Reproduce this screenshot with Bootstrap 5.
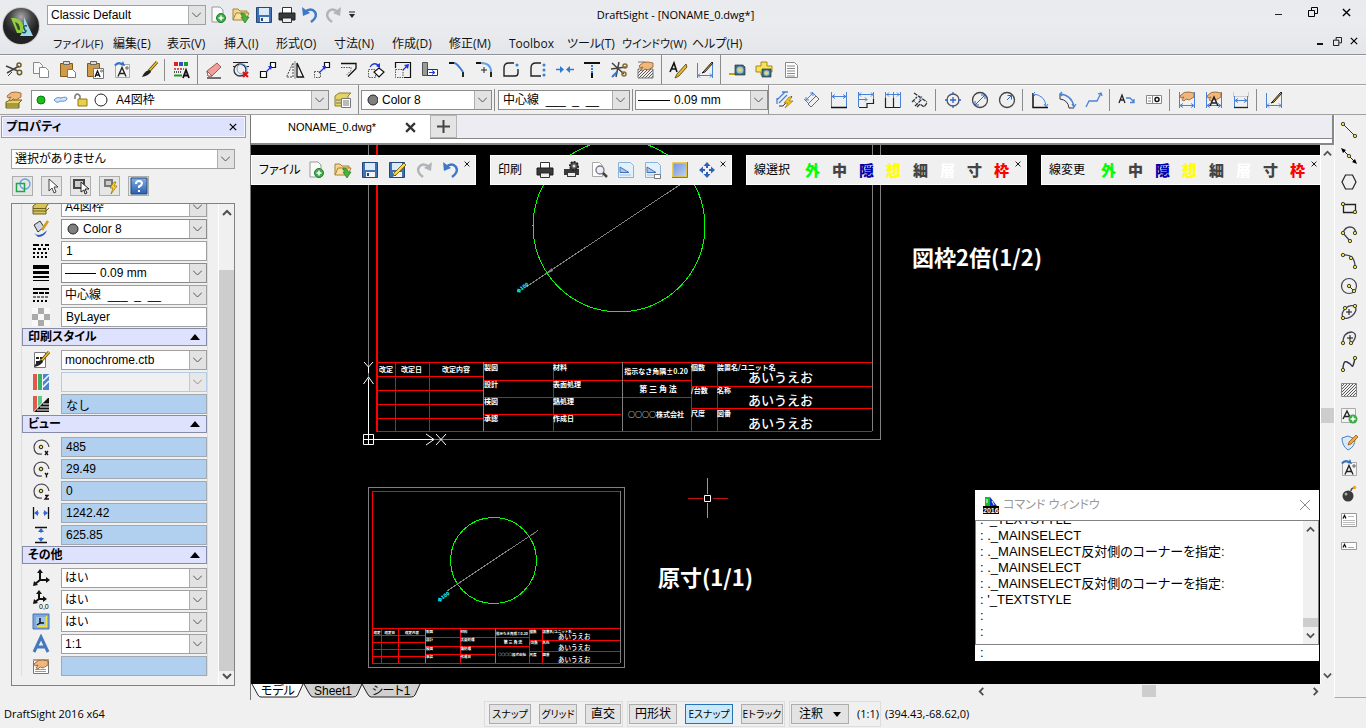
<!DOCTYPE html>
<html lang="ja">
<head>
<meta charset="utf-8">
<meta name="viewport" content="width=device-width, initial-scale=1">
<title>DraftSight - [NONAME_0.dwg*]</title>
<link href="https://cdn.jsdelivr.net/npm/bootstrap@5.3.0/dist/css/bootstrap.min.css" rel="stylesheet">
<script src="https://cdn.jsdelivr.net/npm/bootstrap@5.3.0/dist/js/bootstrap.bundle.min.js" defer></script>
<style>
:root{--ui:"Open Sans","Noto Sans CJK JP",sans-serif;--gothic:"Liberation Sans","Noto Sans CJK JP",sans-serif;--face:#f0f0f0;--line:#a0a0a0}
body{background:var(--face);color:#000;font:11px/16px var(--gothic);font-feature-settings:"palt";overflow:hidden}
button,select,input{font-feature-settings:inherit}
svg{display:block;flex:none}
.ic{width:20px;height:20px}
.ui-face{font-family:var(--ui)}
/* header */
.app-head{background:linear-gradient(#e8eaed,#eaecf0 40%,#e4e6e9);border-bottom:1px solid #8d9199;height:55px}
.title-row{display:grid;grid-template-columns:1fr auto 1fr;height:29px;padding-left:47px;margin-right:7px}
.title-row>.mid{margin-left:-55px}
.win-ctl{height:24px}
.app-logo{left:1px;top:6px;width:40px;height:40px;padding:0;border:0;background:none}
.menus{display:grid;grid-template-columns:60px 54px 57px 52px 58px 58px 57px 60px 58px 55px 70px 60px;padding-left:53px}
.menus a{color:#111;text-decoration:none;white-space:nowrap;font-size:12px;line-height:30px;height:25px}
.menus a:nth-child(1),.menus a:nth-child(11){font-size:11px}
/* controls */
.form-select.pick{font:12px/18px var(--gothic);font-feature-settings:"palt";height:20px;min-height:0;padding:0 20px 0 3px;border:1px solid var(--line);border-radius:0;color:#000;
 background:url("data:image/svg+xml,%3Csvg xmlns='http://www.w3.org/2000/svg' width='9' height='6'%3E%3Cpath d='M0 .5l4.500 4.500L9 .5' fill='none' stroke='%23555'/%3E%3C/svg%3E") right 4px center/9px 6px no-repeat,linear-gradient(#e2e2e2,#e2e2e2) right/16px 100% no-repeat,linear-gradient(#adadad,#adadad) right 16px top/1px 100% no-repeat,#fff}
.form-select.pick:disabled{background-color:var(--face);opacity:.6;border-color:#8fb4dc}
.combo{border:1px solid #8c8c8c;background:#fff;height:20px}
.combo .form-select.pick{border:0;height:18px;padding-left:4px}
.tb{width:27px;height:28px;padding:0;border:0;border-radius:0;display:flex;align-items:center;justify-content:center;flex:none}
.quick .tb{width:23px;height:24px}
.bar{height:30px;border-bottom:1px solid #a0a0a0;box-shadow:inset 0 1px #fafafa}
.bar .sep{width:1px;height:22px;background:#8c8c8c;margin:0 2px;flex:none}
.bar .sep.full{height:29px}
.bar .sep.wide{margin-right:3px}
/* properties */
.side{width:250px;flex:none}
.side-title{border:1px solid #9a9aa8;background:#dfe2fd;box-shadow:inset 0 0 0 1px #f4f5ff;height:22px;margin:1px 4px 0 1px;font-weight:700;font-size:12px}
.side-title button,.x-btn{border:0;background:none;padding:0;line-height:1}
.mini{width:21px;height:20px;border:1px solid #adadad;background:#e6e6e6;padding:0;border-radius:0;display:flex;align-items:center;justify-content:center}
.props{border:1px solid #828282;margin:7px 15px 14px 11px;min-height:0}
.plist{padding:0 10px 0 9px;min-width:0}
.plist>div{border-left:1px solid #ddd;border-right:1px solid #ddd}
.scrolled{margin-top:-7px}
.prow{display:flex;align-items:center;height:20px;margin-bottom:2px}
.prow>svg{margin:0 10px 0 9px}
.prow .form-control{height:20px;min-height:0;padding:0 4px;border:1px solid var(--line);border-radius:0;font:12px/18px var(--gothic);color:#000;min-width:0}
.prow .ro{background:#b1cfee;border-color:#a0a8b0}
.phead{height:18px;margin:-1px 0 4px;border:1px solid #868ba8;background:#dfe2fd;font-weight:700;font-size:12px;line-height:16px;padding:0 6px 0 5px;width:100%;display:flex;justify-content:space-between;align-items:center;text-align:left}
.vbar{width:16px;background:var(--face);flex:none;display:flex;flex-direction:column;align-items:center;border-left:1px solid #fff}
.vbar .thumb{background:#cdcdcd;width:100%}
/* document area */
.work{min-width:0;border-left:1px solid #777}
.tabstrip{height:24px;background:#ececf2;border-bottom:1px solid #888;border-right:2px solid #888}
.doc-tab{width:179px;background:#fff;padding:0 14px 0 37px;height:24px;margin-bottom:-1px}
.add-tab{width:27px;height:23px;background:#e4e4e4;border:1px solid #b5b5b5;padding:0;display:flex;align-items:center;justify-content:center}
.under{height:6px;background:#fff;border-bottom:2px solid #888;border-right:2px solid #888}
.canvas{background:#000;overflow:hidden;min-width:0}
.canvas>svg{position:absolute;width:100%;height:100%;left:0;top:0}
.g{stroke:#808080;fill:none;vector-effect:non-scaling-stroke;shape-rendering:crispEdges}
.r{stroke:#f00;fill:none;vector-effect:non-scaling-stroke;shape-rendering:crispEdges}
.note{font:700 22px "Noto Sans CJK JP",sans-serif;fill:#fff}
.dimtext{font:900 5px "Noto Sans CJK JP",sans-serif;fill:#0ff}
.tt{font:700 7px "Noto Sans CJK JP",sans-serif;fill:#fff}
.tt .big{font-size:13px;font-weight:500}
.tt .mid8{font-size:8px}
.floats{position:absolute;left:0;right:0;top:10px;display:grid;grid-template-columns:225px 242px 281px 282px;column-gap:14px}
.floater{background:var(--face);height:30px;padding-left:8px;box-shadow:inset 0 0 0 1px #fff}
.floater .cap{font-size:12px;flex:1;white-space:nowrap}
.floater .x-btn{width:12px;align-self:flex-start;padding-top:6px}
.kanji{font:900 15px/20px "Noto Sans CJK JP",sans-serif}
.kanji:hover{color:inherit}
.cmd{position:absolute;right:1px;bottom:23px;width:344px;height:171px;background:#fff;box-shadow:2px 3px 8px #0006}
.cmd-title{height:30px;color:#999;font-size:12px;padding:0 8px}
.cmd-log{height:125px;border:1px solid #828282;font-size:13px;line-height:16px}
.cmd-log ol{list-style:none;margin:0;padding:0 0 4px 4px;display:flex;flex-direction:column;justify-content:flex-end;overflow:hidden;white-space:pre}
.cmd-log li{flex:none;height:16px}
.cmd input{border:0;padding:0 5px;height:16px;width:100%;font:13px/16px var(--gothic);display:block}
.sheet-row{height:16px}
.sheet{border:0;background:none;padding:0;height:15px;font-size:12px;line-height:13px;position:relative;margin-right:-2px;white-space:nowrap}
.sheet svg{position:absolute;inset:0;z-index:-1}
.sheets{isolation:isolate}
.rtools{width:32px;flex:none;border-left:1px solid #fff;border-bottom:1px solid #aaa;margin-bottom:2px;padding-top:2px}
.rtools .tb{width:28px;height:26px}
/* status */
.status{height:28px;font-family:var(--ui)}
.sgroup{border:1px solid #ddd;height:26px;padding:0 1px;gap:8px;display:flex;align-items:center}
.sbtn{border:1px solid #adadad;background:#e3e3e3;height:20px;padding:0;font-size:10px;line-height:18px;border-radius:0;white-space:nowrap;display:flex;justify-content:center}
.sbtn.lg{font-size:12px}
.sbtn.on{background:#cce8fb;border-color:#2673b4}
.w35{width:36px}.w38{width:38px}.w42{width:42px}.w48{width:48px}
</style>
</head>
<body class="d-flex flex-column vh-100">
<svg width="0" height="0" class="position-absolute" aria-hidden="true"><defs>
<linearGradient id="blu" x2="0" y2="1"><stop stop-color="#7fb0e8"/><stop offset="1" stop-color="#2b5fae"/></linearGradient>
<linearGradient id="winfill" x2="1" y2="1"><stop stop-color="#6f93dc"/><stop offset="1" stop-color="#c4d4f6"/></linearGradient>
<radialGradient id="orb" cy=".25"><stop stop-color="#aaa"/><stop offset=".6" stop-color="#444"/><stop offset="1" stop-color="#222"/></radialGradient>
<pattern id="hat" width="3" height="3" patternUnits="userSpaceOnUse"><path d="M0 3l3-3" stroke="#333" stroke-width=".8"/></pattern>
<g id="hand"><path d="M3 6q4-5 9-4l5 1v4l-5 3-3-1-2 2-2-1 2-3-3 1z" fill="#f0b77c" stroke="#8b5a2b" stroke-width=".8"/></g>
<g id="brushg"><path d="M18 2l-8 9" stroke="#5b4210" stroke-width="3"/><path d="M18 2l-8 9" stroke="#f0c020" stroke-width="1.500"/><path d="M11 10q-5 0-8 7 6-1 9-5z" fill="#222"/></g>
<symbol id="new" viewBox="0 0 20 20"><path d="M4 2h8l3 3v12H4z" fill="#fafafa" stroke="#999"/><circle cx="13" cy="13" r="4.500" fill="#3fae49" stroke="#1e7f2c"/><path d="M13 10.500v5M10.500 13h5" stroke="#fff" stroke-width="1.500"/></symbol>
<symbol id="open" viewBox="0 0 20 20"><path d="M2 15V4h5l2 2h7v3" fill="#f4d68c" stroke="#a78437"/><path d="M2 15L5 8h13l-3 7z" fill="#f7e0a0" stroke="#a78437"/><path d="M10 8q5 0 5 4h3l-4 6-4-6h2q0-2-2-2z" fill="#45b53c" stroke="#227a1f" stroke-width=".7"/></symbol>
<symbol id="save" viewBox="0 0 20 20"><path d="M2.500 2.500h15v15h-15z" fill="#3f72b5" stroke="#23487c"/><path d="M5 3h10v7H5z" fill="#dbe9f8"/><path d="M6 12h9v5H6z" fill="#f2f2f2"/><path d="M7 13h2v3H7z" fill="#23487c"/></symbol>
<symbol id="saveas" viewBox="0 0 20 20"><use href="#save"/><path d="M17 3L7 13l-1 3 3-1L19 5z" fill="#ffd93b" stroke="#6b5200" stroke-width=".8"/></symbol>
<symbol id="print" viewBox="0 0 20 20"><path d="M5.500 8V2.500h9V8" fill="#fff" stroke="#333"/><path d="M2 8h16v7h-3v-2H5v2H2z" fill="#3a3a3a" stroke="#1c1c1c"/><path d="M5.500 13h9v4.500h-9z" fill="#eee" stroke="#333"/></symbol>
<symbol id="printg" viewBox="0 0 20 20"><path d="M2 9h15v6h-3v2H5v-2H2z" fill="#3a3a3a"/><path d="M6 13h7v3H6z" fill="#eee"/><circle cx="12" cy="6" r="4" fill="#555" stroke="#222" stroke-width="2" stroke-dasharray="2 1"/><circle cx="12" cy="6" r="1.500" fill="#ddd"/></symbol>
<symbol id="undo" viewBox="0 0 20 20"><path d="M5 7q6-5 10 0 3 5-4 10" fill="none" stroke="#3f78c6" stroke-width="2.500"/><path d="M2 2l1 9 7-3z" fill="#3f78c6"/></symbol>
<symbol id="redo" viewBox="0 0 20 20"><path d="M15 7q-6-5-10 0-3 5 4 10" fill="none" stroke="#b0b4b8" stroke-width="2.500"/><path d="M18 2l-1 9-7-3z" fill="#b0b4b8"/></symbol>
<symbol id="cut" viewBox="0 0 20 20"><path d="M2 6l12 5M3 13l12-7" stroke="#444" stroke-width="1.600"/><circle cx="15" cy="5" r="2" fill="none" stroke="#6b5a2c" stroke-width="1.500"/><circle cx="15.500" cy="12.500" r="2.200" fill="none" stroke="#6b5a2c" stroke-width="1.500"/><path d="M4 16l4-4" stroke="#444"/></symbol>
<symbol id="copy" viewBox="0 0 20 20"><path d="M2.500 2.500h6l3 3v8h-9z" fill="#f8f8f8" stroke="#888"/><path d="M8.500 7.500h6l3 3v7h-9z" fill="#fff" stroke="#888"/></symbol>
<symbol id="paste" viewBox="0 0 20 20"><path d="M2.500 3.500h12v13h-12z" fill="#cf9b45" stroke="#7c5a20"/><path d="M5.500 1.500h6v3h-6z" fill="#ddd" stroke="#666"/><path d="M9.500 9.500h5l3 3v5h-8z" fill="#fff" stroke="#777"/></symbol>
<symbol id="pasteA" viewBox="0 0 20 20"><use href="#paste"/><path d="M8.500 8.500h10v10h-10z" fill="#fff" stroke="#777"/><path d="M10 17l2.500-6 2.500 6M11 15h3" fill="none" stroke="#111" stroke-width="1.300"/><circle cx="16.500" cy="11" r="1" fill="none" stroke="#333" stroke-width=".7"/></symbol>
<symbol id="atext" viewBox="0 0 20 20"><path d="M3.500 4.500h14v13h-14z" fill="#f4f4f4" stroke="#aaa"/><path d="M6 16.500l4-9 4 9M7.500 13.500h5" fill="none" stroke="#222" stroke-width="1.400"/><path d="M2 5q4-5 8-2l1-2 2 5-5-1 1-1Q6 3 4 6z" fill="#2b6fca"/><circle cx="15" cy="8" r="1.200" fill="none" stroke="#333" stroke-width=".8"/></symbol>
<symbol id="brush" viewBox="0 0 20 20"><use href="#brushg"/></symbol>
<symbol id="palette" viewBox="0 0 20 20"><path d="M2 2h4v4H2z" fill="#d22"/><path d="M7 2h4v4H7z" fill="#2b50c8"/><path d="M12 2h4v4h-4z" fill="#1a9a2e"/><path d="M2 9h10" stroke="#c22" stroke-width="1.500" stroke-dasharray="2 1"/><path d="M2 12h8" stroke="#222" stroke-width="1.500" stroke-dasharray="1 1"/><path d="M2 15.500h8" stroke="#1a9a2e" stroke-width="2"/><path d="M11 18l3-8 3 8M12 15.500h4" fill="none" stroke="#111" stroke-width="1.800"/></symbol>
<symbol id="eraser" viewBox="0 0 20 20"><path d="M3 18h14" stroke="#444" stroke-width="1.500"/><path d="M3 11L13 3l4 4-9 9H4z" fill="#eda19b" stroke="#a35a54"/><path d="M3 11l5 5H4z" fill="#fff" stroke="#a35a54"/></symbol>
<symbol id="circx" viewBox="0 0 20 20"><path d="M2 2.500h15M2 6.500h2M15 6.500h3" stroke="#222"/><circle cx="9" cy="10" r="6" fill="none" stroke="#333" stroke-width="1.300"/><circle cx="11" cy="9" r="5" fill="none" stroke="#6aa0e0"/><path d="M12 12l5 5m0-5l-5 5" stroke="#e01010" stroke-width="2"/></symbol>
<symbol id="move" viewBox="0 0 20 20"><path d="M2.500 11.500h6v6h-6zM12.500 2.500h5v5h-5z" fill="#fff" stroke="#111" stroke-width="1.200"/><path d="M8 12l5-5" stroke="#2036d8" stroke-width="1.300"/><path d="M14 6h-4l3 4z" fill="#2036d8"/></symbol>
<symbol id="mirror" viewBox="0 0 20 20"><path d="M8 3v14H1.500z" fill="none" stroke="#444" stroke-dasharray="2 1"/><path d="M12 3v14h6.500z" fill="none" stroke="#111" stroke-width="1.300"/><path d="M10 1v18" stroke="#888"/></symbol>
<symbol id="copyent" viewBox="0 0 20 20"><path d="M2.500 11.500h6v6h-6z" fill="none" stroke="#555" stroke-dasharray="1.500 1"/><path d="M12.500 2.500h5v5h-5z" fill="#fff" stroke="#111" stroke-width="1.200"/><path d="M7 13l6-6" stroke="#2036d8" stroke-width="1.300"/><path d="M14 6h-4l3 4z" fill="#2036d8"/></symbol>
<symbol id="offset" viewBox="0 0 20 20"><path d="M2 3.500h15v5l-8 8" fill="none" stroke="#111" stroke-width="1.300"/><path d="M2 7.500h10v3l-5 5" fill="none" stroke="#555" stroke-dasharray="1.500 1"/></symbol>
<symbol id="rotate" viewBox="0 0 20 20"><path d="M2.500 9.500h7v8h-7z" fill="none" stroke="#555" stroke-dasharray="1.500 1"/><path d="M13 8l5 4-5 5-5-5z" fill="#fff" stroke="#111" stroke-width="1.200"/><path d="M4 7q4-6 9-1" fill="none" stroke="#2036d8" stroke-width="1.300"/><path d="M14 8V3l-4 3z" fill="#2036d8"/></symbol>
<symbol id="scale" viewBox="0 0 20 20"><path d="M2.500 8V2.500h15v15H11" fill="none" stroke="#111" stroke-width="1.200"/><path d="M2.500 9.500h7.500v8H2.500z" fill="none" stroke="#555" stroke-dasharray="1.500 1"/><path d="M10 10l5-5" stroke="#2036d8" stroke-width="1.300"/><path d="M16 4l-5 1 4 4z" fill="#2036d8"/></symbol>
<symbol id="stretch" viewBox="0 0 20 20"><path d="M2.500 2.500h5v13h-5z" fill="#999" stroke="#555"/><path d="M7.500 9.500h10v6h-10z" fill="#fff" stroke="#333"/><path d="M9 12.500h5m-2-2l3 2-3 2" fill="none" stroke="#2036d8"/></symbol>
<symbol id="fillet" viewBox="0 0 20 20"><path d="M2 3h5M16 12v5" stroke="#111" stroke-width="1.800"/><path d="M7 3q3 0 9 9" fill="none" stroke="#3b7fd0" stroke-width="2"/></symbol>
<symbol id="chamfer" viewBox="0 0 20 20"><path d="M2 3h5M17 12v5" stroke="#111" stroke-width="1.800"/><path d="M7 3q10 0 10 9" fill="none" stroke="#62a0e8" stroke-width="2"/><path d="M7 10h6M10 7v6" stroke="#222"/></symbol>
<symbol id="cor1" viewBox="0 0 20 20"><path d="M13 3H8Q3 3 3 8v8h11q3 0 3-3V9" fill="none" stroke="#222" stroke-width="1.400"/><circle cx="16" cy="5" r="1.500" fill="#3b7fd0"/></symbol>
<symbol id="cor2" viewBox="0 0 20 20"><path d="M13 3H8Q3 3 3 8v8h10" fill="none" stroke="#222" stroke-width="1.400"/><circle cx="16" cy="5" r="1.500" fill="#3b7fd0"/><circle cx="16" cy="10" r="1.500" fill="#3b7fd0"/><circle cx="16" cy="15" r="1.500" fill="#3b7fd0"/></symbol>
<symbol id="join" viewBox="0 0 20 20"><path d="M1 9.500h5M14 9.500h5" stroke="#2e7ad1" stroke-width="1.500"/><path d="M5 6l4 3.500L5 13zM15 6l-4 3.500 4 3.500z" fill="#2e7ad1"/></symbol>
<symbol id="trim" viewBox="0 0 20 20"><path d="M2 3h16" stroke="#111" stroke-width="2"/><path d="M10 5v8" stroke="#3b7fd0" stroke-width="2" stroke-dasharray="2 1"/><path d="M10 13v5" stroke="#111" stroke-width="2"/></symbol>
<symbol id="split" viewBox="0 0 20 20"><path d="M3 3l12 11M10 2L7 17M2 9l15-2" stroke="#444" stroke-width="1.500"/><circle cx="16" cy="6" r="2" fill="none" stroke="#8a6a30" stroke-width="1.500"/><circle cx="15" cy="14" r="2" fill="none" stroke="#8a6a30" stroke-width="1.500"/><path d="M3 17l5-5" stroke="#2e7ad1" stroke-width="2"/></symbol>
<symbol id="hatchhand" viewBox="0 0 20 20"><path d="M2 9h15v9H2z" fill="url(#hat)" stroke="#777"/><path d="M2 2h7" stroke="#777"/><use href="#hand"/></symbol>
<symbol id="apen" viewBox="0 0 20 20"><path d="M2 12L6 3l3 9M3 9h5" fill="none" stroke="#111" stroke-width="1.600"/><path d="M18 4l-9 10-2 4 4-2 8-9z" fill="#e5b92e" stroke="#4c3a0a" stroke-width=".8"/></symbol>
<symbol id="dimpen" viewBox="0 0 20 20"><path d="M2.500 3v15M17.500 3v15M3 15.500h14M5 13.500l-2 2 2 2M15 13.500l2 2-2 2" fill="none" stroke="#4a82d8"/><path d="M17 2l-8 9-2 2 3-1 8-9z" fill="#d8a928" stroke="#222"/></symbol>
<symbol id="tape" viewBox="0 0 20 20"><path d="M2 14h8" stroke="#c8a400" stroke-width="2"/><path d="M8 5h8l2 2v8H8z" fill="#3e6f86" stroke="#234" stroke-width=".7"/><circle cx="13" cy="10" r="3.500" fill="#9cc4d4"/><circle cx="13" cy="10" r="1.800" fill="#f5d94a"/></symbol>
<symbol id="tape2" viewBox="0 0 20 20"><path d="M7 2h6v4h5v6h-5v3H7v-3H2V6h5z" fill="#f7e25a" stroke="#a58b10"/><path d="M8 9h9v8H8z" fill="#3e6f86" stroke="#234" stroke-width=".7"/><circle cx="12.500" cy="13" r="2.800" fill="#9cc4d4"/><circle cx="12.500" cy="13" r="1.500" fill="#f5d94a"/></symbol>
<symbol id="page" viewBox="0 0 20 20"><path d="M4.500 2.500h9l3 3v12h-12z" fill="#fff" stroke="#888"/><path d="M6 6h8M6 8.500h8M6 11h8M6 13.500h8M6 16h8" stroke="#888"/></symbol>
<symbol id="laymgr" viewBox="0 0 20 20"><path d="M2 12l4-2h12l-3 3v5H2z" fill="#e4d265" stroke="#6d611a"/><path d="M2 14h13M2 16h13" stroke="#6d611a"/><use href="#hand"/></symbol>
<symbol id="layers" viewBox="0 0 20 20"><path d="M2 9l4-3h12l-3 4v7H2z" fill="#d8c45c" stroke="#6d611a"/><path d="M2 11.500h13M2 14h13l3-3" stroke="#6d611a" fill="none"/></symbol>
<symbol id="layst" viewBox="0 0 20 20"><path d="M2 6l4-3h12l-3 3v10H2z" fill="#e4d265" stroke="#8d812a"/><path d="M8.500 8.500h9v9h-9z" fill="#fff" stroke="#777"/><path d="M3 10h5M3 13h5M10 11h6M10 13h6M10 15h6" stroke="#777"/></symbol>
<symbol id="d1" viewBox="0 0 20 20"><path d="M2 10l8-8M4 13l8-8M2 8v6M7 2h6" fill="none" stroke="#4a82d8" stroke-width="1.300"/><path d="M4 16h4L17 6" fill="none" stroke="#333"/><path d="M14 7l-5 6h4l-3 5 8-7h-4l3-4z" fill="#ffc61a" stroke="#94700a" stroke-width=".7"/></symbol>
<symbol id="d2" viewBox="0 0 20 20"><path d="M2 9l4 4M10 2l4 4M4 10l7-7M4 10V7M4 10h3M11 3v3M11 3H8" stroke="#4a82d8" fill="none"/><path d="M6 14l8-8 3 3-8 8z" fill="none" stroke="#667" stroke-width="1"/></symbol>
<symbol id="d3" viewBox="0 0 20 20"><path d="M2.500 2v16M17.500 2v16M3 6.500h14M6 4.500l-3 2 3 2M14 4.500l3 2-3 2" stroke="#4a82d8" fill="none"/><path d="M2 17.500h16" stroke="#111" stroke-width="1.500"/></symbol>
<symbol id="d4" viewBox="0 0 20 20"><path d="M2.500 2v15M17.500 2v8M3 4.500h14M3 9.500h8M5 2.500l-2 2 2 2M15 2.500l2 2-2 2M9 7.500l2 2-2 2" stroke="#4a82d8" fill="none"/><path d="M3 17.500h8v-4h6.500V9" stroke="#222" fill="none" stroke-width="1.200"/></symbol>
<symbol id="d5" viewBox="0 0 20 20"><path d="M2.500 2v10M10.500 2v15M17.500 2v15M3 4.500h15M6 2.500l-2 2 2 2M14 2.500l2 2-2 2" stroke="#4a82d8" fill="none"/><path d="M2.500 8v9.500h8V8M10 17.500h7.500" stroke="#222" fill="none" stroke-width="1.200"/></symbol>
<symbol id="d6" viewBox="0 0 20 20"><path d="M4 3l13 9M2 12l5-5M5 16l7-7M7 17l3-3 4 3 3-4" stroke="#333" fill="none" stroke-width="1.300" stroke-dasharray="4 1"/><path d="M4 11l4 4M12 6l-3 4" stroke="#4a82d8"/></symbol>
<symbol id="d7" viewBox="0 0 20 20"><circle cx="10" cy="10" r="6" fill="none" stroke="#555" stroke-width="1.300"/><path d="M10 7v6M7 10h6M10 2v3M10 15v3M2 10h3M15 10h3" stroke="#2b62d0" stroke-width="1.300"/></symbol>
<symbol id="d8" viewBox="0 0 20 20"><circle cx="10" cy="10" r="7.500" fill="none" stroke="#444" stroke-width="1.300"/><path d="M5 15L15 5M5 15v-4M5 15h4M15 5v4M15 5h-4" stroke="#2b62d0" fill="none"/></symbol>
<symbol id="d9" viewBox="0 0 20 20"><circle cx="10" cy="10" r="7.500" fill="none" stroke="#444" stroke-width="1.300"/><path d="M10 10l4.500-4.500M14.500 5.500v4M14.500 5.500h-4" stroke="#2b62d0" fill="none"/></symbol>
<symbol id="d10" viewBox="0 0 20 20"><path d="M3 3v14.500h15" stroke="#111" fill="none" stroke-width="1.500"/><path d="M3 4q12 1 13 12M5 2l-2 2 2 2M14 14l2 3 2-3" stroke="#4a82d8" fill="none"/></symbol>
<symbol id="d11" viewBox="0 0 20 20"><path d="M3 9q8 1 9 9M3 4v5M12 18h5" stroke="#333" fill="none"/><path d="M3 4q12 1 14 13M5 2l-2 2 2 2M15 14l2 3 2-3" stroke="#4a82d8" fill="none" stroke-width="1.300"/></symbol>
<symbol id="d12" viewBox="0 0 20 20"><path d="M2 17l3-6h8l4-8M14 4l3-1 1 3" stroke="#4a82d8" fill="none" stroke-width="1.300"/></symbol>
<symbol id="d13" viewBox="0 0 20 20"><path d="M2 13l3-8 3 8M3 10h4" stroke="#222" fill="none" stroke-width="1.300"/><path d="M9 8h4l4 4M17 9v3.500h-4" stroke="#4a82d8" fill="none" stroke-width="1.300"/></symbol>
<symbol id="d14" viewBox="0 0 20 20"><path d="M2.500 5.500h15v8h-15zM8.500 5v9" fill="#fff" stroke="#888"/><path d="M4 8h3M4 11h3" stroke="#888"/><circle cx="13" cy="9.500" r="2" fill="none" stroke="#111" stroke-width="1.500"/></symbol>
<symbol id="d15" viewBox="0 0 20 20"><path d="M2.500 2v16M17.500 2v16M3 15.500h14M6 13.500l-3 2 3 2M14 13.500l3 2-3 2" stroke="#4a82d8" fill="none"/><use href="#hand"/></symbol>
<symbol id="d16" viewBox="0 0 20 20"><use href="#d15"/><path d="M6 16l4-9 4 9M8 13h5" stroke="#222" fill="none" stroke-width="1.500"/></symbol>
<symbol id="d17" viewBox="0 0 20 20"><path d="M2.500 2v5M17.500 2v5M2 6.500h16" stroke="#ccc"/><path d="M3.500 6v12M16.500 6v12M4 10.500h12M7 8.500l-3 2 3 2M13 8.500l3 2-3 2" stroke="#4a82d8" fill="none"/><path d="M3 17.500h14" stroke="#222" stroke-width="1.300"/></symbol>
<symbol id="paint" viewBox="0 0 20 20"><path d="M3 6l6-4 4 6-6 5z" fill="#cfd6df" stroke="#333"/><path d="M3 14q6 5 13-3-2 7-9 7z" fill="#2a55c4"/><path d="M17 2l-6 9" stroke="#d89b18" stroke-width="2.500"/></symbol>
<symbol id="lt" viewBox="0 0 20 20"><path d="M2 4h16" stroke="#000" stroke-width="2" stroke-dasharray="6 2 2 2"/><path d="M2 8h16" stroke="#000" stroke-width="2" stroke-dasharray="3 2"/><path d="M2 12h16M2 16h16" stroke="#000" stroke-width="2" stroke-dasharray="2 2"/></symbol>
<symbol id="lw" viewBox="0 0 20 20"><path d="M2 2h16v4H2zM2 8h16v3H2zM2 13h16v2H2zM2 17h16v1H2z"/></symbol>
<symbol id="lts" viewBox="0 0 20 20"><path d="M2 4h16" stroke="#000" stroke-width="2"/><path d="M2 8h16" stroke="#000" stroke-dasharray="5 1" stroke-width="2"/><path d="M2 12h16" stroke="#000" stroke-dasharray="3 1" stroke-width="1"/><path d="M2 16h16" stroke="#000" stroke-dasharray="2 2" stroke-width="2"/></symbol>
<symbol id="tran" viewBox="0 0 20 20"><path d="M1 1h18v18H1z" fill="#f8f8f8"/><path d="M7 1h6v6H7zM1 7h6v6H1zM13 7h6v6h-6zM7 13h6v6H7z" fill="#aaa"/></symbol>
<symbol id="pstyle" viewBox="0 0 20 20"><path d="M3.500 2.500h11v15h-11z" fill="#fff" stroke="#777"/><path d="M5 8h7M5 12h5" stroke="#222" stroke-width="2" stroke-dasharray="3 1"/><use href="#brushg"/></symbol>
<symbol id="bars" viewBox="0 0 20 20"><path d="M2 2h4v16H2z" fill="#e2584e"/><path d="M7 2h4v16H7z" fill="#35b36a"/><path d="M12 2h6v16h-6z" fill="#4d82cc"/><path d="M12 9l6-6M12 15l6-6" stroke="#fff" stroke-width="1.500"/></symbol>
<symbol id="bars2" viewBox="0 0 20 20"><path d="M2 2h4v12l-4 4z" fill="#e2584e"/><path d="M7 2h4v7l-4 4z" fill="#5cc988"/><path d="M17 4L3 18h15V4z" fill="#111"/><path d="M9 13h9M6 16h12M12 10h6" stroke="#fff"/></symbol>
<symbol id="cen" viewBox="0 0 20 20"><path d="M11 17q-8 1-8-7 1-7 8-7 6 1 7 7" fill="none" stroke="#444" stroke-width="1.200"/><circle cx="10" cy="10" r="1.800" fill="#f5e03a" stroke="#222"/></symbol>
<symbol id="cx" viewBox="0 0 20 20"><use href="#cen"/><path d="M14 14l3 4m0-4l-3 4" stroke="#111" stroke-width="1.300"/></symbol>
<symbol id="cy" viewBox="0 0 20 20"><use href="#cen"/><path d="M14 14l1.500 2 1.500-2M15.500 16v2.500" fill="none" stroke="#111" stroke-width="1.300"/></symbol>
<symbol id="cz" viewBox="0 0 20 20"><use href="#cen"/><path d="M14 14.500h3l-3 3.500h4" fill="none" stroke="#111" stroke-width="1.300"/></symbol>
<symbol id="wid" viewBox="0 0 20 20"><path d="M2.500 4v12M17.500 4v12" stroke="#111" stroke-width="1.300"/><path d="M4 10h4M12 10h4" stroke="#3568d8"/><path d="M3 10l4-3v6zM17 10l-4-3v6z" fill="#3568d8"/></symbol>
<symbol id="hei" viewBox="0 0 20 20"><path d="M4 2.500h12M4 17.500h12" stroke="#111" stroke-width="1.300"/><path d="M10 5v3M10 12v4" stroke="#3568d8"/><path d="M10 3L7 7h6zM10 17l-3-4h6z" fill="#3568d8"/></symbol>
<symbol id="ucs" viewBox="0 0 20 20"><path d="M9 4v8h8M9 12l-5 4" fill="none" stroke="#111" stroke-width="2"/><path d="M9 1L6 5h6zM19 12l-4-3v6zM2 18l1-5 4 4z" fill="#111"/></symbol>
<symbol id="ucs0" viewBox="0 0 20 20"><path d="M8 3v6h6M8 9l-4 3" fill="none" stroke="#111" stroke-width="2"/><path d="M8 0L5 4h6zM16 9l-4-3v6zM2 14l1-5 4 4z" fill="#111"/><text x="8" y="19" font-size="7" font-family="Liberation Sans">0,0</text></symbol>
<symbol id="vp" viewBox="0 0 20 20"><path d="M2 2h16v15H2z" fill="#7fa7dd" stroke="#4974b4"/><path d="M5 5h10v9H5z" fill="#9cc4e8"/><path d="M15.500 4v10.500H6" fill="none" stroke="#f6e23b" stroke-width="1.500"/><path d="M9 6v5h4M9 11l-3 2" fill="none" stroke="#111" stroke-width="1.500"/></symbol>
<symbol id="bigA" viewBox="0 0 20 20"><path d="M3 18L10 3l7 15M6 13h8" fill="none" stroke="#4678bd" stroke-width="3"/></symbol>
<symbol id="handdoc" viewBox="0 0 20 20"><path d="M2.500 4.500h15v13h-15z" fill="#fff" stroke="#777"/><path d="M4 13.500h11M4 15.500h11" stroke="#999"/><path d="M2 3h16v2H2z" fill="#b98"/><g transform="translate(0 2)"><use href="#hand"/></g></symbol>
<symbol id="shapes" viewBox="0 0 20 20"><circle cx="12" cy="8" r="5" fill="none" stroke="#5ba2dd" stroke-width="1.300"/><path d="M3.500 7.500h8v8h-8z" fill="none" stroke="#1fa64a" stroke-width="1.500"/></symbol>
<symbol id="arrow" viewBox="0 0 20 20"><path d="M7 3v12l3-3 2 5 2-1-2-5h4z" fill="#fff" stroke="#444"/></symbol>
<symbol id="selwin" viewBox="0 0 20 20"><path d="M3 4h10v8H3z" fill="#ccc" stroke="#444" stroke-width="2"/><path d="M10 6v10l3-2 1 4 2-1-2-4h4z" fill="#fff" stroke="#222"/></symbol>
<symbol id="quick" viewBox="0 0 20 20"><path d="M5 4h7v6H5z" fill="#ccc" stroke="#777" stroke-width="2"/><path d="M14 6l-4 6h3l-2 6 6-8h-3l2-4z" fill="#ffd22e" stroke="#94700a" stroke-width=".7"/></symbol>
<symbol id="help" viewBox="0 0 20 20"><path d="M2 2h16v16H2z" fill="url(#blu)" stroke="#23487c"/><path d="M7 8q0-3 3-3t3 2.500q0 1.500-3 3V12M10 14v2" fill="none" stroke="#fff" stroke-width="2"/></symbol>
<symbol id="prev" viewBox="0 0 20 20"><path d="M3.500 2.500h7l3 3v11h-10z" fill="#fff" stroke="#aaa"/><circle cx="11" cy="10" r="4" fill="#eef" stroke="#777" stroke-width="1.300"/><path d="M14 13l4 4" stroke="#444" stroke-width="2.500"/></symbol>
<symbol id="lay1" viewBox="0 0 20 20"><path d="M2.500 2.500h12l3 3v12h-15z" fill="#e2f1fc" stroke="#86b4da"/><path d="M4 12.500V7l9 5.500z" fill="#a9c6ec" stroke="#4a72b0"/><path d="M4 15h11" stroke="#9cc3ea"/></symbol>
<symbol id="lay2" viewBox="0 0 20 20"><use href="#lay1"/><path d="M11.500 14.500h6v4h-6z" fill="#fff" stroke="#777"/></symbol>
<symbol id="win" viewBox="0 0 20 20"><path d="M3 3h14v14H3z" fill="url(#winfill)" stroke="#e4c02a" stroke-width="1.500"/><path d="M2 17.500h15.500V2" fill="none" stroke="#777"/></symbol>
<symbol id="pan" viewBox="0 0 20 20"><path d="M10 2L6.500 6h7zM10 18l-3.500-4h7zM2 10l4-3.500v7zM18 10l-4-3.500v7z" fill="#2e62b8"/><path d="M10 5v3M10 12v3M5 10h3M12 10h3" stroke="#2e62b8" stroke-width="2"/></symbol>
<g id="pt"><circle r="1.700" fill="#f2e13c" stroke="#333" stroke-width=".9"/></g>
<symbol id="t1" viewBox="0 0 20 20"><path d="M4 4l12 12" stroke="#333"/><use href="#pt" x="4" y="4"/><use href="#pt" x="16" y="16"/></symbol>
<symbol id="t2" viewBox="0 0 20 20"><path d="M3 3l14 14" stroke="#222"/><path d="M2 2l5 2-3 3zM18 18l-5-2 3-3z"/><use href="#pt" x="10" y="10"/></symbol>
<symbol id="t3" viewBox="0 0 20 20"><path d="M6.500 3h7L17 10l-3.500 7h-7L3 10z" fill="none" stroke="#222" stroke-width="1.200"/></symbol>
<symbol id="t4" viewBox="0 0 20 20"><path d="M4.500 6.500h12v8h-12z" fill="none" stroke="#222" stroke-width="1.300"/><use href="#pt" x="4" y="6"/><use href="#pt" x="16" y="14"/></symbol>
<symbol id="t5" viewBox="0 0 20 20"><path d="M11 17l-7-8q2-6 7-6t6 6" fill="none" stroke="#445" stroke-width="1.300"/><use href="#pt" x="4" y="9"/><use href="#pt" x="16" y="9"/><use href="#pt" x="11" y="17"/></symbol>
<symbol id="t6" viewBox="0 0 20 20"><path d="M4 5q12-1 12 12" fill="none" stroke="#445" stroke-width="1.300"/><use href="#pt" x="4" y="5"/><use href="#pt" x="12" y="8"/><use href="#pt" x="16" y="17"/></symbol>
<symbol id="t7" viewBox="0 0 20 20"><circle cx="10" cy="10" r="7.500" fill="none" stroke="#445" stroke-width="1.200"/><path d="M10 10l5 5" stroke="#222"/><use href="#pt" x="10" y="10"/><use href="#pt" x="15" y="15"/></symbol>
<symbol id="t8" viewBox="0 0 20 20"><ellipse cx="10" cy="10" rx="8" ry="5" transform="rotate(-40 10 10)" fill="none" stroke="#445" stroke-width="1.300"/><path d="M7 10h6M10 7v6" stroke="#111"/><use href="#pt" x="16" y="4"/><use href="#pt" x="4" y="16"/><use href="#pt" x="6" y="6"/></symbol>
<symbol id="t9" viewBox="0 0 20 20"><path d="M4 15q0-11 9-11 7 2 0 11" fill="none" stroke="#445" stroke-width="1.300"/><path d="M8 10h6M11 7v6" stroke="#111"/><use href="#pt" x="4" y="15"/><use href="#pt" x="12" y="15"/></symbol>
<symbol id="t10" viewBox="0 0 20 20"><path d="M4 16q0-10 4-8t5 4 3-8" fill="none" stroke="#334" stroke-width="1.400"/><use href="#pt" x="4" y="16"/><use href="#pt" x="16" y="4"/></symbol>
<symbol id="t11" viewBox="0 0 20 20"><path d="M2.500 3.500h15v13h-15z" fill="url(#hat)" stroke="#888"/></symbol>
<symbol id="t12" viewBox="0 0 20 20"><path d="M2.500 2.500h14v14h-14z" fill="#f4f4f4" stroke="#aaa"/><path d="M4 13l4-8 4 8M5.500 10.500h5" fill="none" stroke="#222" stroke-width="1.400"/><circle cx="14" cy="13" r="4.500" fill="#3fae49"/><path d="M14 10.500v5M11.500 13h5" stroke="#fff" stroke-width="1.500"/></symbol>
<symbol id="t13" viewBox="0 0 20 20"><path d="M3 6l6-2 7 3q0 8-7 11-6-4-6-12z" fill="#dbe8f6" stroke="#4d82c4"/><path d="M17 3l-7 7-1 3 3-1 7-7z" fill="#f4a93a" stroke="#8b5a10" stroke-width=".8"/></symbol>
<symbol id="bomb" viewBox="0 0 20 20"><circle cx="9" cy="12" r="5.500" fill="#3a3a3a"/><circle cx="7" cy="10" r="1.500" fill="#aaa"/><path d="M12 7q0-3 3-3" fill="none" stroke="#555" stroke-width="1.500"/><circle cx="15.500" cy="3.500" r="1.800" fill="#f5a21a"/></symbol>
<symbol id="note1" viewBox="0 0 20 20"><path d="M2.500 3.500h15v13h-15z" fill="#fff" stroke="#999"/><path d="M4 8.500l1.500-3 1.500 3" fill="none" stroke="#111" stroke-width="1.300"/><path d="M9 6.500h6M4 10.500h12M4 12.500h12M4 14.500h12" stroke="#bbb"/></symbol>
<symbol id="note2" viewBox="0 0 20 20"><path d="M2.500 6.500h15v7h-15z" fill="#fff" stroke="#999"/><path d="M4 11.500l1.500-3 1.500 3" fill="none" stroke="#111" stroke-width="1.300"/><path d="M9 11.500h6" stroke="#aaa"/></symbol>
<symbol id="up" viewBox="0 0 10 10"><path d="M1 7l4-4 4 4" fill="none" stroke="#505050" stroke-width="2"/></symbol>
<symbol id="dn" viewBox="0 0 10 10"><path d="M1 3l4 4 4-4" fill="none" stroke="#505050" stroke-width="2"/></symbol>
<symbol id="xx" viewBox="0 0 10 10"><path d="M1 1l8 8M9 1L1 9" stroke="currentColor" stroke-width="1.500"/></symbol>
<symbol id="rest" viewBox="0 0 10 10"><path d="M3.500 3V.5h6v6H7M.5 3.500h6v6h-6z" fill="none" stroke="currentColor"/></symbol>

<g id="frame">
 <path class="g" d="M0 0h512v360H0zM504 8v344"/>
 <path class="r" d="M504 8H8v344h496M9 8v344M8 283h496M8 297h107M8 311h107M8 325h107M8 339h107M27 283v69M61 283v69M185 283v69M323 283v69M349 283v69M115 301h208M115 318h208M115 335h138M323 307h181M323 329h181"/>
 <path class="g" d="M115 283v69M254 283v69"/>
 <circle class="r" cx="251" cy="147" r="86" style="stroke:#0f0"/>
 <path class="g" d="M158 208L340 87" stroke="#999"/><path d="M176 196l8-7 1 3zM324 98l8-7 1 3z" fill="#888"/>
 <g class="tt">
  <text x="11" y="293">改定</text><text x="33" y="293">改定日</text><text x="74" y="293">改定内容</text>
  <text x="116" y="291">製図</text><text x="116" y="308">設計</text><text x="116" y="325">検図</text><text x="116" y="342">承認</text>
  <text x="185" y="291">材料</text><text x="185" y="308">表面処理</text><text x="185" y="325">熱処理</text><text x="185" y="342">作成日</text>
  <text x="288" y="295" text-anchor="middle">指示なき角隅±0.20</text><text x="290" y="313" text-anchor="middle" class="mid8">第 三 角 法</text><text x="288" y="338" text-anchor="middle">○○○○株式会社</text>
  <text x="323" y="291">個数</text><text x="323" y="314">/台数</text><text x="323" y="337">尺度</text>
  <text x="349" y="291">装置名/ユニット名</text><text x="349" y="314">名称</text><text x="349" y="337">図番</text>
  <text class="big" x="380" y="303">あいうえお</text><text class="big" x="380" y="326">あいうえお</text><text class="big" x="380" y="349">あいうえお</text>
 </g>
</g>
</defs></svg>

<header class="app-head position-relative ui-face">
 <button class="app-logo position-absolute" aria-label="DraftSight"><svg width="40" height="40" viewBox="0 0 40 40"><circle cx="20" cy="20" r="19" fill="#ccc"/><circle cx="20" cy="20" r="18" fill="url(#orb)"/><path d="M10 12h4q9 2 9 12l-1 3h-6z" fill="#8fd03c"/><path d="M14 16q5 1 5 8h-2z" fill="#3b4a2a"/><path d="M23 11l9 19H19l4-7z" fill="#9fd8e8"/><path d="M26 20q-4-1-3 2t2 3q-1 3-4 1" fill="none" stroke="#1c5066" stroke-width="1.500"/></svg></button>
 <div class="title-row">
  <div class="d-flex align-items-center quick">
   <select class="form-select pick ui-face" style="width:159px" aria-label="Workspace"><option>Classic Default</option></select>
   <button class="btn tb ms-0" aria-label="New"><svg class="ic"><use href="#new"/></svg></button><button class="btn tb" aria-label="Open"><svg class="ic"><use href="#open"/></svg></button><button class="btn tb" aria-label="Save"><svg class="ic"><use href="#save"/></svg></button><button class="btn tb" aria-label="Print"><svg class="ic"><use href="#print"/></svg></button><button class="btn tb" aria-label="Undo"><svg class="ic"><use href="#undo"/></svg></button><button class="btn tb" aria-label="Redo"><svg class="ic"><use href="#redo"/></svg></button>
   <button class="x-btn ps-1" aria-label="Customize"><svg width="8" height="8"><path d="M1 1h6" stroke="#223"/><path d="M1 3h6l-3 4z" fill="#223"/></svg></button>
  </div>
  <div class="mid align-self-center">DraftSight - [NONAME_0.dwg*]</div>
  <div class="win-ctl d-flex justify-content-end align-items-center gap-4 pe-1">
   <button class="x-btn" aria-label="Minimize"><svg width="9" height="9"><path d="M0 6.500h7" stroke="#222"/></svg></button>
   <button class="x-btn" aria-label="Restore"><svg width="10" height="10"><use href="#rest"/></svg></button>
   <button class="x-btn pe-1" aria-label="Close"><svg width="9" height="9"><use href="#xx"/></svg></button>
  </div>
 </div>
 <div class="d-flex justify-content-between">
 <nav class="menus"><a href="#">ファイル(F)</a><a href="#">編集(E)</a><a href="#">表示(V)</a><a href="#">挿入(I)</a><a href="#">形式(O)</a><a href="#">寸法(N)</a><a href="#">作成(D)</a><a href="#">修正(M)</a><a href="#">Toolbox</a><a href="#">ツール(T)</a><a href="#">ウインドウ(W)</a><a href="#">ヘルプ(H)</a></nav>
 <div class="win-ctl d-flex align-items-center gap-2 pe-2">
  <button class="x-btn" aria-label="Minimize document"><svg width="8" height="9"><path d="M0 7h6" stroke="#111" stroke-width="2"/></svg></button>
  <button class="x-btn" aria-label="Restore document"><svg width="9" height="9"><use href="#rest"/></svg></button>
  <button class="x-btn" aria-label="Close document"><svg width="8" height="8"><use href="#xx"/></svg></button>
 </div></div>
</header>

<div class="bar d-flex align-items-center ps-0" role="toolbar" aria-label="Modify">
<button class="btn tb" aria-label="Cut"><svg class="ic"><use href="#cut"/></svg></button><button class="btn tb" aria-label="Copy"><svg class="ic"><use href="#copy"/></svg></button><button class="btn tb" aria-label="Paste"><svg class="ic"><use href="#paste"/></svg></button><button class="btn tb" aria-label="Paste text"><svg class="ic"><use href="#pasteA"/></svg></button><button class="btn tb" aria-label="Edit text"><svg class="ic"><use href="#atext"/></svg></button><button class="btn tb" aria-label="Painter"><svg class="ic"><use href="#brush"/></svg></button><i class="sep wide"></i>
<button class="btn tb" aria-label="Properties"><svg class="ic"><use href="#palette"/></svg></button><i class="sep full"></i>
<button class="btn tb" aria-label="Delete"><svg class="ic"><use href="#eraser"/></svg></button><button class="btn tb" aria-label="Discard duplicates"><svg class="ic"><use href="#circx"/></svg></button><button class="btn tb" aria-label="Copy entity"><svg class="ic"><use href="#move"/></svg></button><button class="btn tb" aria-label="Mirror"><svg class="ic"><use href="#mirror"/></svg></button><button class="btn tb" aria-label="Move"><svg class="ic"><use href="#copyent"/></svg></button><button class="btn tb" aria-label="Offset"><svg class="ic"><use href="#offset"/></svg></button><button class="btn tb" aria-label="Rotate"><svg class="ic"><use href="#rotate"/></svg></button><button class="btn tb" aria-label="Scale"><svg class="ic"><use href="#scale"/></svg></button><button class="btn tb" aria-label="Stretch"><svg class="ic"><use href="#stretch"/></svg></button><button class="btn tb" aria-label="Chamfer"><svg class="ic"><use href="#fillet"/></svg></button><button class="btn tb" aria-label="Fillet"><svg class="ic"><use href="#chamfer"/></svg></button><button class="btn tb" aria-label="Split at point"><svg class="ic"><use href="#cor1"/></svg></button><button class="btn tb" aria-label="Split"><svg class="ic"><use href="#cor2"/></svg></button><button class="btn tb" aria-label="Weld"><svg class="ic"><use href="#join"/></svg></button><button class="btn tb" aria-label="Extend"><svg class="ic"><use href="#trim"/></svg></button><button class="btn tb" aria-label="Trim"><svg class="ic"><use href="#split"/></svg></button><button class="btn tb" aria-label="Edit hatch"><svg class="ic"><use href="#hatchhand"/></svg></button><i class="sep full"></i>
<button class="btn tb" aria-label="Text style"><svg class="ic"><use href="#apen"/></svg></button><button class="btn tb" aria-label="Dimension style"><svg class="ic"><use href="#dimpen"/></svg></button><i class="sep full"></i>
<button class="btn tb" aria-label="Measure"><svg class="ic"><use href="#tape"/></svg></button><button class="btn tb" aria-label="Area"><svg class="ic"><use href="#tape2"/></svg></button><button class="btn tb" aria-label="List"><svg class="ic"><use href="#page"/></svg></button>
</div>

<div class="bar d-flex align-items-center" role="toolbar" aria-label="Layers and dimensions">
<button class="btn tb ms-0" aria-label="Layer manager"><svg class="ic"><use href="#laymgr"/></svg></button>
<div class="combo d-flex align-items-center ms-1" style="width:298px"><svg width="80" height="18" viewBox="0 0 80 18"><circle cx="9" cy="9" r="4" fill="#18c018" stroke="#0a7a0a"/><path d="M22 9q3-4 7-2 6-2 6 1-1 3-7 2-3 3-6-1z" fill="#cfe6fa" stroke="#5a8fc8"/><path d="M43 8V5q2-4 5 0v3" fill="none" stroke="#777" stroke-width="1.500"/><path d="M46 8h9v7h-9z" fill="#e8cf4c" stroke="#8f7a18"/><circle cx="69" cy="9" r="6" fill="#fff" stroke="#222"/></svg><select class="form-select pick flex-grow-1" aria-label="Layer"><option>A4図枠</option></select></div>
<button class="btn tb" aria-label="Layer states"><svg class="ic"><use href="#layst"/></svg></button><i class="sep full"></i>
<div class="combo d-flex align-items-center" style="width:131px"><svg width="16" height="18"><circle cx="11" cy="9" r="5" fill="#808080" stroke="#222"/></svg><select class="form-select pick" aria-label="Line color"><option>Color 8</option></select></div><i class="sep wide"></i>
<div class="combo" style="width:132px"><select class="form-select pick" aria-label="Line style"><option>中心線 &nbsp;___ &nbsp;_ &nbsp;__</option></select></div><i class="sep"></i>
<div class="combo d-flex align-items-center" style="width:133px"><svg width="34" height="18"><path d="M2 9.500h32" stroke="#000"/></svg><select class="form-select pick" aria-label="Line weight"><option>0.09 mm</option></select></div><i class="sep full ms-0"></i>
<button class="btn tb" aria-label="Smart dimension"><svg class="ic"><use href="#d1"/></svg></button><button class="btn tb" aria-label="Parallel"><svg class="ic"><use href="#d2"/></svg></button><button class="btn tb" aria-label="Linear"><svg class="ic"><use href="#d3"/></svg></button><button class="btn tb" aria-label="Baseline"><svg class="ic"><use href="#d4"/></svg></button><button class="btn tb" aria-label="Continue"><svg class="ic"><use href="#d5"/></svg></button><button class="btn tb" aria-label="Jogged"><svg class="ic"><use href="#d6"/></svg></button><i class="sep wide"></i>
<button class="btn tb" aria-label="Center mark"><svg class="ic"><use href="#d7"/></svg></button><button class="btn tb" aria-label="Diameter"><svg class="ic"><use href="#d8"/></svg></button><button class="btn tb" aria-label="Radius"><svg class="ic"><use href="#d9"/></svg></button><i class="sep wide"></i>
<button class="btn tb" aria-label="Angular"><svg class="ic"><use href="#d10"/></svg></button><button class="btn tb" aria-label="Arc length"><svg class="ic"><use href="#d11"/></svg></button><button class="btn tb" aria-label="Ordinate"><svg class="ic"><use href="#d12"/></svg></button><i class="sep wide"></i>
<button class="btn tb" aria-label="Leader"><svg class="ic"><use href="#d13"/></svg></button><button class="btn tb" aria-label="Tolerance"><svg class="ic"><use href="#d14"/></svg></button><i class="sep wide"></i>
<button class="btn tb" aria-label="Edit dimension"><svg class="ic"><use href="#d15"/></svg></button><button class="btn tb" aria-label="Edit dimension text"><svg class="ic"><use href="#d16"/></svg></button><button class="btn tb" aria-label="Rebuild dimension"><svg class="ic"><use href="#d17"/></svg></button><i class="sep wide"></i>
<button class="btn tb" aria-label="Dimension style manager"><svg class="ic"><use href="#dimpen"/></svg></button>
</div>

<main class="d-flex flex-grow-1" style="min-height:0">
<aside class="side d-flex flex-column">
 <div class="side-title d-flex align-items-center justify-content-between ps-1 pe-1"><span>プロパティ</span><button class="me-1" aria-label="Close"><svg width="8" height="8"><use href="#xx"/></svg></button></div>
 <div style="margin:11px 15px 7px 11px"><select class="form-select pick" aria-label="Selection"><option>選択がありません</option></select></div>
 <div class="d-flex gap-2 ps-2 ms-1">
  <button class="mini" aria-label="Select matching"><svg class="ic"><use href="#shapes"/></svg></button><button class="mini" aria-label="Select"><svg class="ic"><use href="#arrow"/></svg></button><button class="mini" aria-label="Window select"><svg class="ic"><use href="#selwin"/></svg></button><button class="mini" aria-label="Quick select"><svg class="ic"><use href="#quick"/></svg></button><button class="mini" aria-label="Help"><svg class="ic"><use href="#help"/></svg></button>
 </div>
 <div class="props d-flex flex-grow-1 overflow-hidden">
  <div class="plist flex-grow-1"><div class="scrolled">
   <div class="prow"><svg class="ic"><use href="#layers"/></svg><select class="form-select pick" aria-label="Layer"><option>A4図枠</option></select></div>
   <div class="prow"><svg class="ic"><use href="#paint"/></svg><div class="combo d-flex flex-grow-1"><svg width="17" height="18"><circle cx="11" cy="9" r="5" fill="#808080" stroke="#222"/></svg><select class="form-select pick" aria-label="Color"><option>Color 8</option></select></div></div>
   <div class="prow"><svg class="ic"><use href="#lt"/></svg><input class="form-control" value="1" aria-label="Line scale"></div>
   <div class="prow"><svg class="ic"><use href="#lw"/></svg><div class="combo d-flex flex-grow-1"><svg width="34" height="18"><path d="M3 9.500h31" stroke="#000"/></svg><select class="form-select pick" aria-label="Line weight"><option>0.09 mm</option></select></div></div>
   <div class="prow"><svg class="ic"><use href="#lts"/></svg><select class="form-select pick" aria-label="Line style"><option>中心線 &nbsp;___ &nbsp;_ &nbsp;__</option></select></div>
   <div class="prow"><svg class="ic"><use href="#tran"/></svg><input class="form-control" value="ByLayer" aria-label="Transparency"></div>
   <button class="phead">印刷スタイル<svg width="10" height="6"><path d="M0 6h10L5 0z"/></svg></button>
   <div class="prow"><svg class="ic"><use href="#pstyle"/></svg><select class="form-select pick" aria-label="Print style table"><option>monochrome.ctb</option></select></div>
   <div class="prow"><svg class="ic"><use href="#bars"/></svg><select class="form-select pick" disabled aria-label="Print style"><option></option></select></div>
   <div class="prow"><svg class="ic"><use href="#bars2"/></svg><input class="form-control ro" readonly value="なし" aria-label="Attached table"></div>
   <button class="phead">ビュー<svg width="10" height="6"><path d="M0 6h10L5 0z"/></svg></button>
   <div class="prow"><svg class="ic"><use href="#cx"/></svg><input class="form-control ro" readonly value="485" aria-label="Center X"></div>
   <div class="prow"><svg class="ic"><use href="#cy"/></svg><input class="form-control ro" readonly value="29.49" aria-label="Center Y"></div>
   <div class="prow"><svg class="ic"><use href="#cz"/></svg><input class="form-control ro" readonly value="0" aria-label="Center Z"></div>
   <div class="prow"><svg class="ic"><use href="#wid"/></svg><input class="form-control ro" readonly value="1242.42" aria-label="Width"></div>
   <div class="prow"><svg class="ic"><use href="#hei"/></svg><input class="form-control ro" readonly value="625.85" aria-label="Height"></div>
   <button class="phead">その他<svg width="10" height="6"><path d="M0 6h10L5 0z"/></svg></button>
   <div class="prow"><svg class="ic"><use href="#ucs"/></svg><select class="form-select pick" aria-label="CCS icon on"><option>はい</option></select></div>
   <div class="prow"><svg class="ic"><use href="#ucs0"/></svg><select class="form-select pick" aria-label="CCS icon at origin"><option>はい</option></select></div>
   <div class="prow"><svg class="ic"><use href="#vp"/></svg><select class="form-select pick" aria-label="CCS per viewport"><option>はい</option></select></div>
   <div class="prow"><svg class="ic"><use href="#bigA"/></svg><select class="form-select pick" aria-label="Annotation scale"><option>1:1</option></select></div>
   <div class="prow mb-0"><svg class="ic"><use href="#handdoc"/></svg><input class="form-control ro" readonly aria-label="Hyperlink"></div>
  </div></div>
  <div class="vbar py-1"><svg width="10" height="10"><use href="#up"/></svg><div class="w-100 flex-grow-1 d-flex flex-column"><div style="flex:52"></div><div class="thumb" style="flex:405"></div></div><svg width="10" height="10"><use href="#dn"/></svg></div>
 </div>
</aside>

<section class="work flex-grow-1 d-flex flex-column">
 <div class="tabstrip d-flex">
  <div class="doc-tab d-flex align-items-center justify-content-between"><span>NONAME_0.dwg*</span><button class="x-btn" aria-label="Close tab"><svg width="11" height="11" viewBox="0 0 10 10"><path d="M1 1l8 8M9 1L1 9" stroke="#333" stroke-width="2"/></svg></button></div>
  <button class="add-tab" aria-label="New tab"><svg width="13" height="13"><path d="M6.500 0v13M0 6.500h13" stroke="#444" stroke-width="2"/></svg></button>
 </div>
 <div class="under"></div>
 <div class="d-flex flex-grow-1" style="min-height:0">
  <div class="canvas flex-grow-1 position-relative">
   <svg role="img" aria-label="NONAME_0.dwg">
    <use href="#frame" transform="translate(117 -66)"/>
    <use href="#frame" transform="translate(117 342) scale(.5)"/>
    <text class="dimtext" transform="translate(267 148) rotate(-35)">φ100</text>
    <text class="dimtext" transform="translate(188 457) rotate(-35)">φ100</text>
    <text class="note" x="661" y="121">図枠2倍(1/2)</text>
    <text class="note" x="407" y="441">原寸(1/1)</text>
    <g fill="none" stroke="#fff"><path d="M112.500 289.500h10v10h-10zM117.500 300v-66M112 294.500h70M112.500 239l5-7 5 7M175 289l8 5.500-8 5.500M113 217l4.500 5 4.500-5M117.500 222v6M185 289l10 11M195 289l-10 11"/></g>
    <path d="M437 353.500h15M462 353.500h15" stroke="#c01010"/><path d="M456.500 333v16M456.500 358v15" stroke="#999"/><path d="M453.500 350.500h6v6h-6z" fill="none" stroke="#fff"/>
   </svg>
   <div class="floats">
    <div class="floater d-flex align-items-center" role="toolbar" aria-label="ファイル"><span class="cap">ファイル</span><button class="btn tb" aria-label="New"><svg class="ic"><use href="#new"/></svg></button><button class="btn tb" aria-label="Open"><svg class="ic"><use href="#open"/></svg></button><button class="btn tb" aria-label="Save"><svg class="ic"><use href="#save"/></svg></button><button class="btn tb" aria-label="Save as"><svg class="ic"><use href="#saveas"/></svg></button><button class="btn tb" aria-label="Redo"><svg class="ic"><use href="#redo"/></svg></button><button class="btn tb" aria-label="Undo"><svg class="ic"><use href="#undo"/></svg></button><button class="x-btn" aria-label="Close"><svg width="6" height="6"><use href="#xx"/></svg></button></div>
    <div class="floater d-flex align-items-center" role="toolbar" aria-label="印刷"><span class="cap">印刷</span><button class="btn tb" aria-label="Print"><svg class="ic"><use href="#print"/></svg></button><button class="btn tb" aria-label="Batch print"><svg class="ic"><use href="#printg"/></svg></button><button class="btn tb" aria-label="Preview"><svg class="ic"><use href="#prev"/></svg></button><button class="btn tb" aria-label="Page layout"><svg class="ic"><use href="#lay1"/></svg></button><button class="btn tb" aria-label="Page layout manager"><svg class="ic"><use href="#lay2"/></svg></button><button class="btn tb" aria-label="View window"><svg class="ic"><use href="#win"/></svg></button><button class="btn tb" aria-label="Pan"><svg class="ic"><use href="#pan"/></svg></button><button class="x-btn" aria-label="Close"><svg width="6" height="6"><use href="#xx"/></svg></button></div>
    <div class="floater d-flex align-items-center" role="toolbar" aria-label="線選択"><span class="cap">線選択</span><button class="btn tb kanji" style="color:#0f0">外</button><button class="btn tb kanji" style="color:#444">中</button><button class="btn tb kanji" style="color:#00a">隠</button><button class="btn tb kanji" style="color:#ff0">想</button><button class="btn tb kanji" style="color:#444">細</button><button class="btn tb kanji" style="color:#fff">層</button><button class="btn tb kanji" style="color:#444">寸</button><button class="btn tb kanji" style="color:#f00">枠</button><button class="x-btn" aria-label="Close"><svg width="6" height="6"><use href="#xx"/></svg></button></div>
    <div class="floater d-flex align-items-center" role="toolbar" aria-label="線変更"><span class="cap">線変更</span><button class="btn tb kanji" style="color:#0f0">外</button><button class="btn tb kanji" style="color:#444">中</button><button class="btn tb kanji" style="color:#00a">隠</button><button class="btn tb kanji" style="color:#ff0">想</button><button class="btn tb kanji" style="color:#444">細</button><button class="btn tb kanji" style="color:#fff">層</button><button class="btn tb kanji" style="color:#444">寸</button><button class="btn tb kanji" style="color:#f00">枠</button><button class="x-btn" aria-label="Close"><svg width="6" height="6"><use href="#xx"/></svg></button></div>
   </div>
   <div class="cmd">
    <div class="cmd-title d-flex align-items-center gap-1"><svg width="16" height="17"><path d="M2 0h5v9H2z" fill="#10c020"/><path d="M7 0l7 9H7z" fill="#1030c8"/><path d="M4 2v4M9 4l2 4" stroke="#fff"/><path d="M0 9h16v8H0z"/><text x="0" y="16" font-size="7" font-weight="700" font-family="Liberation Sans" fill="#fff">2016</text></svg><span class="flex-grow-1">コマンド ウィンドウ</span><button class="x-btn text-secondary" aria-label="Close"><svg width="12" height="12" viewBox="0 0 12 12"><path d="M1 1l10 10M11 1L1 11" stroke="#888"/></svg></button></div>
    <div class="cmd-log d-flex"><ol class="flex-grow-1"><li>: '_TEXTSTYLE</li><li>: ._MAINSELECT</li><li>: ._MAINSELECT反対側のコーナーを指定:</li><li>: ._MAINSELECT</li><li>: ._MAINSELECT反対側のコーナーを指定:</li><li>: '_TEXTSTYLE</li><li>:</li><li>:</li></ol>
    <div class="vbar py-1"><svg width="9" height="9"><use href="#up"/></svg><div class="w-100 flex-grow-1 d-flex flex-column justify-content-end pb-1"><div class="thumb" style="height:9px"></div></div><svg width="9" height="9"><use href="#dn"/></svg></div></div>
    <input value=":" aria-label="コマンド">
   </div>
  </div>
  <div class="vbar py-1" style="width:14px"><svg width="9" height="9"><use href="#up"/></svg><div class="w-100 flex-grow-1 d-flex flex-column"><div style="flex:248"></div><div class="thumb" style="flex:14"></div><div style="flex:246"></div></div><svg width="9" height="9"><use href="#dn"/></svg></div>
 </div>
 <div class="sheet-row d-flex justify-content-between">
  <div class="sheets d-flex">
   <button class="sheet" style="width:54px"><svg width="54" height="14"><path d="M1 0l6 11q1 2 3 2h34q3 0 3-2l5-11" fill="#fff" stroke="#222"/></svg>モデル</button>
   <button class="sheet" style="width:60px"><svg width="60" height="14"><path d="M1 0l5 9q2 4 4 4h40q3 0 4-2l5-11" fill="#d0d0d0" stroke="#222"/></svg>Sheet1</button>
   <button class="sheet" style="width:60px"><svg width="60" height="14"><path d="M1 0l5 9q2 4 4 4h40q3 0 4-2l5-11" fill="#d0d0d0" stroke="#222"/></svg>シート1</button>
  </div>
  <div class="d-flex align-items-center" style="width:343px;margin-right:14px;height:14px"><svg width="9" height="9" viewBox="0 0 10 10"><path d="M7 1L3 5l4 4" fill="none" stroke="#505050" stroke-width="2"/></svg><div class="flex-grow-1 d-flex"><div style="flex:156"></div><div style="flex:13;background:#cdcdcd;height:12px"></div><div style="flex:155"></div></div><svg width="9" height="9" viewBox="0 0 10 10"><path d="M3 1l4 4-4 4" fill="none" stroke="#505050" stroke-width="2"/></svg></div>
 </div>
</section>

<div class="rtools d-flex flex-column" role="toolbar" aria-label="Draw">
<button class="btn tb" aria-label="Line"><svg class="ic"><use href="#t1"/></svg></button><button class="btn tb" aria-label="Infinite line"><svg class="ic"><use href="#t2"/></svg></button><button class="btn tb" aria-label="Polygon"><svg class="ic"><use href="#t3"/></svg></button><button class="btn tb" aria-label="Rectangle"><svg class="ic"><use href="#t4"/></svg></button><button class="btn tb" aria-label="Polyline"><svg class="ic"><use href="#t5"/></svg></button><button class="btn tb" aria-label="Arc"><svg class="ic"><use href="#t6"/></svg></button><button class="btn tb" aria-label="Circle"><svg class="ic"><use href="#t7"/></svg></button><button class="btn tb" aria-label="Ellipse"><svg class="ic"><use href="#t8"/></svg></button><button class="btn tb" aria-label="Elliptical arc"><svg class="ic"><use href="#t9"/></svg></button><button class="btn tb" aria-label="Spline"><svg class="ic"><use href="#t10"/></svg></button><button class="btn tb" aria-label="Hatch"><svg class="ic"><use href="#t11"/></svg></button><button class="btn tb" aria-label="Add text"><svg class="ic"><use href="#t12"/></svg></button><button class="btn tb" aria-label="Cloud"><svg class="ic"><use href="#t13"/></svg></button><button class="btn tb" aria-label="Edit text"><svg class="ic"><use href="#atext"/></svg></button><button class="btn tb" aria-label="Explode"><svg class="ic"><use href="#bomb"/></svg></button><button class="btn tb" aria-label="Note"><svg class="ic"><use href="#note1"/></svg></button><button class="btn tb" aria-label="Simple note"><svg class="ic"><use href="#note2"/></svg></button>
</div>
</main>

<footer class="status d-flex align-items-center">
 <span class="ps-1" style="width:484px">DraftSight 2016 x64</span>
 <div class="sgroup me-1 ps-1"><button class="sbtn w42">スナップ</button><button class="sbtn w38">グリッド</button><button class="sbtn lg w35">直交</button></div>
 <div class="sgroup"><button class="sbtn lg w48">円形状</button><button class="sbtn on w48">Eスナップ</button><button class="sbtn w42">Eトラック</button></div>
 <div class="sgroup ms-1"><button class="sbtn lg align-items-center" style="width:58px;gap:10px">注釈 <svg width="8" height="5"><path d="M0 0h8L4 5z"/></svg></button><span>(1:1)</span></div>
 <span class="ps-1">(394.43,-68.62,0)</span>
</footer>
</body>
</html>
